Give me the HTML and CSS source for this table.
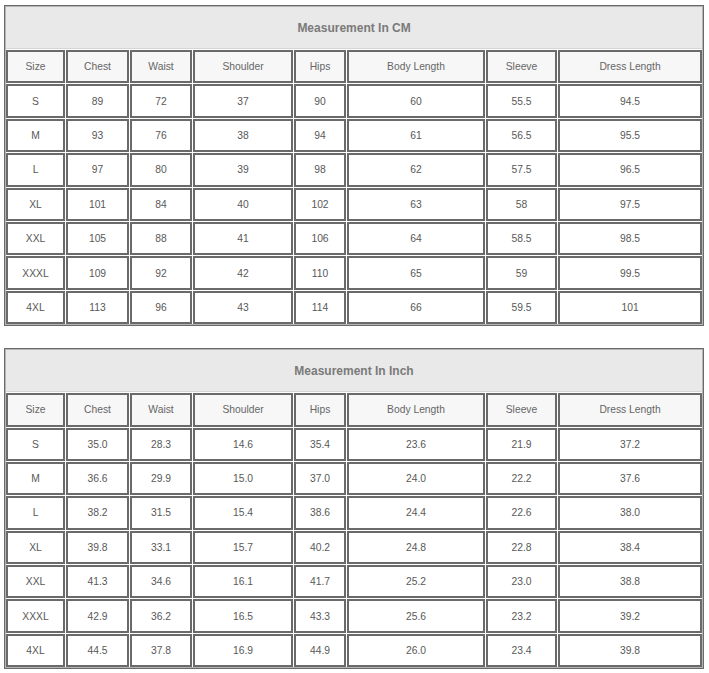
FILE: index.html
```html
<!DOCTYPE html>
<html>
<head>
<meta charset="utf-8">
<link rel="stylesheet" href="styles.css">
</head>
<body>
<div class="page">
<table class="size-table">
  <colgroup>
    <col class="c-size"><col class="c-chest"><col class="c-waist"><col class="c-shoulder"><col class="c-hips"><col class="c-body"><col class="c-sleeve"><col class="c-dress">
  </colgroup>
  <tr class="title-row"><th colspan="8" class="title">Measurement In CM</th></tr>
  <tr class="head-row"><th>Size</th><th>Chest</th><th>Waist</th><th>Shoulder</th><th>Hips</th><th>Body Length</th><th>Sleeve</th><th>Dress Length</th></tr>
  <tr><td class="sz">S</td><td>89</td><td>72</td><td>37</td><td>90</td><td>60</td><td>55.5</td><td>94.5</td></tr>
  <tr><td class="sz">M</td><td>93</td><td>76</td><td>38</td><td>94</td><td>61</td><td>56.5</td><td>95.5</td></tr>
  <tr><td class="sz">L</td><td>97</td><td>80</td><td>39</td><td>98</td><td>62</td><td>57.5</td><td>96.5</td></tr>
  <tr><td class="sz">XL</td><td>101</td><td>84</td><td>40</td><td>102</td><td>63</td><td>58</td><td>97.5</td></tr>
  <tr><td class="sz">XXL</td><td>105</td><td>88</td><td>41</td><td>106</td><td>64</td><td>58.5</td><td>98.5</td></tr>
  <tr><td class="sz">XXXL</td><td>109</td><td>92</td><td>42</td><td>110</td><td>65</td><td>59</td><td>99.5</td></tr>
  <tr><td class="sz">4XL</td><td>113</td><td>96</td><td>43</td><td>114</td><td>66</td><td>59.5</td><td>101</td></tr>
</table>

<table class="size-table">
  <colgroup>
    <col class="c-size"><col class="c-chest"><col class="c-waist"><col class="c-shoulder"><col class="c-hips"><col class="c-body"><col class="c-sleeve"><col class="c-dress">
  </colgroup>
  <tr class="title-row"><th colspan="8" class="title">Measurement In Inch</th></tr>
  <tr class="head-row"><th>Size</th><th>Chest</th><th>Waist</th><th>Shoulder</th><th>Hips</th><th>Body Length</th><th>Sleeve</th><th>Dress Length</th></tr>
  <tr><td class="sz">S</td><td>35.0</td><td>28.3</td><td>14.6</td><td>35.4</td><td>23.6</td><td>21.9</td><td>37.2</td></tr>
  <tr><td class="sz">M</td><td>36.6</td><td>29.9</td><td>15.0</td><td>37.0</td><td>24.0</td><td>22.2</td><td>37.6</td></tr>
  <tr><td class="sz">L</td><td>38.2</td><td>31.5</td><td>15.4</td><td>38.6</td><td>24.4</td><td>22.6</td><td>38.0</td></tr>
  <tr><td class="sz">XL</td><td>39.8</td><td>33.1</td><td>15.7</td><td>40.2</td><td>24.8</td><td>22.8</td><td>38.4</td></tr>
  <tr><td class="sz">XXL</td><td>41.3</td><td>34.6</td><td>16.1</td><td>41.7</td><td>25.2</td><td>23.0</td><td>38.8</td></tr>
  <tr><td class="sz">XXXL</td><td>42.9</td><td>36.2</td><td>16.5</td><td>43.3</td><td>25.6</td><td>23.2</td><td>39.2</td></tr>
  <tr><td class="sz">4XL</td><td>44.5</td><td>37.8</td><td>16.9</td><td>44.9</td><td>26.0</td><td>23.4</td><td>39.8</td></tr>
</table>
</div>
</body>
</html>
```

FILE: styles.css
```css
html, body {
  margin: 0;
  padding: 0;
  background: #ffffff;
}
.page {
  padding: 5px 0 0 4px;
  display: flex;
  flex-direction: column;
  gap: 22px;
  font-family: "Liberation Sans", Arial, sans-serif;
}
.size-table {
  width: 700px;
  table-layout: fixed;
  border-collapse: separate;
  border-spacing: 1px;
  border: 1px solid #6a6a6a;
  box-shadow: inset 0 0 0 1px #b5b5b5;
}
.c-size { width: 59px; }
.c-chest { width: 63px; }
.c-waist { width: 62px; }
.c-shoulder { width: 100px; }
.c-hips { width: 52px; }
.c-body { width: 138px; }
.c-sleeve { width: 71px; }
.c-dress { width: 144px; }

.size-table th,
.size-table td {
  padding: 0;
  border: 2px solid #6a6a6a;
  text-align: center;
  vertical-align: middle;
  font-size: 10.3px;
  color: #585858;
  font-weight: normal;
}
.title-row { height: 42px; }
.size-table .title {
  background: #e9e9e9;
  border-color: #e9e9e9 #e9e9e9 #d4d4d4 #e9e9e9;
  border-width: 1px;
  font-size: 12px;
  font-weight: bold;
  color: #7a7a7a;
}
.head-row th {
  background: #f7f7f7;
  color: #666666;
}
.size-table tr { height: 33.4px; }
.size-table tr.title-row { height: 42px; }
.sz { color: #4e4e4e; }
```
